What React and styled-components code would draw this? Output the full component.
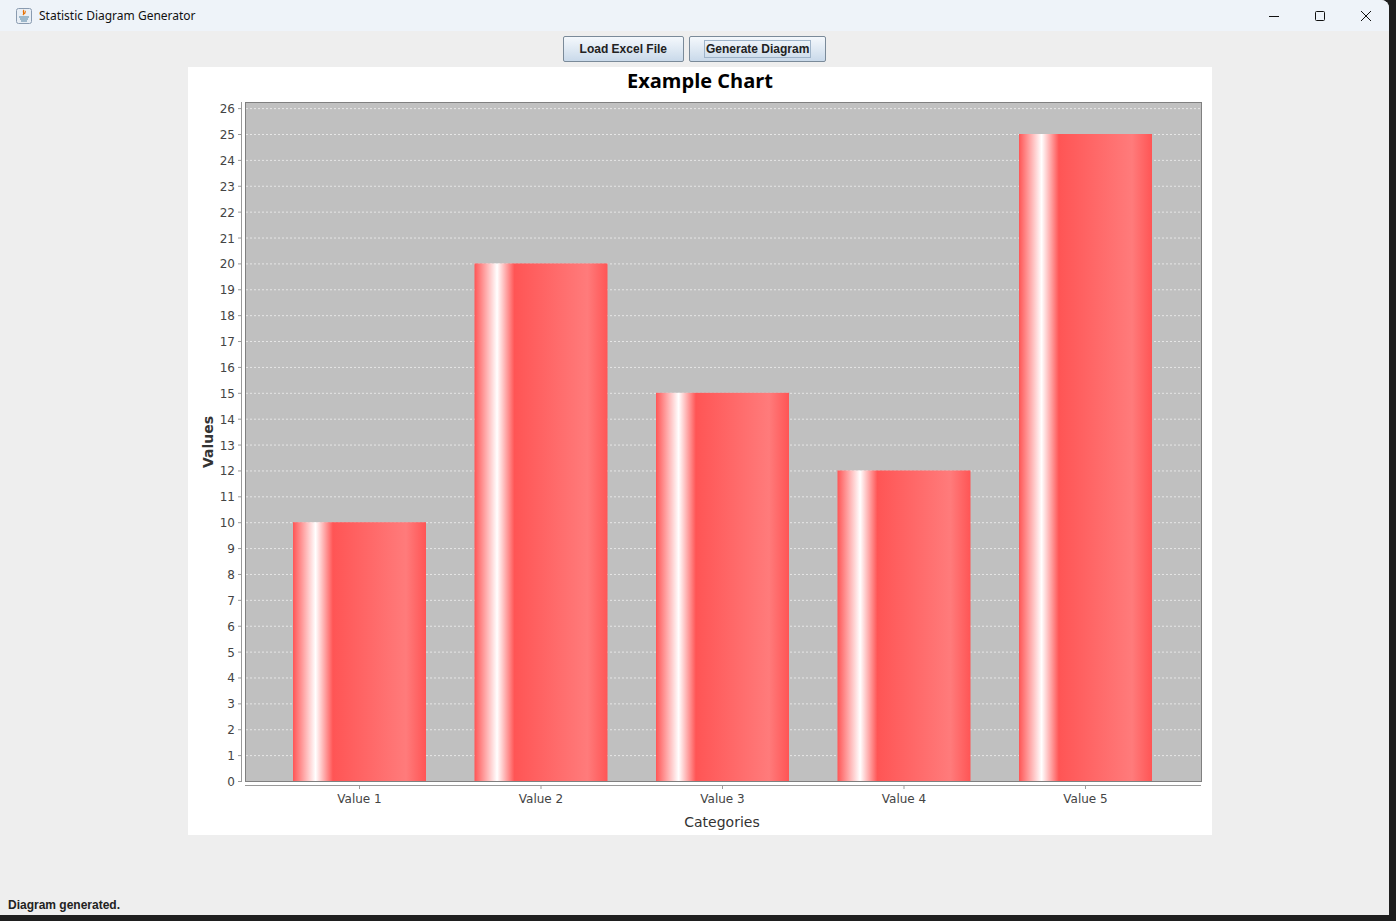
import React from "react";
import styled, { createGlobalStyle } from "styled-components";

const Global = createGlobalStyle`
  html, body { margin: 0; padding: 0; background: #1f1f1f; overflow: hidden; }
  body { font-family: "Liberation Sans", Arial, sans-serif; }
`;

const Window = styled.div`
  width: 1389px; height: 915px; background: #eeeeee;
  display: flex; flex-direction: column; border-radius: 0 8px 0 0; overflow: hidden;
`;
const TitleBar = styled.div`
  height: 31px; background: #eef3f9; display: flex; align-items: center;
  padding-left: 16px; font-family: "Segoe UI", "Noto Sans", sans-serif; font-size: 12px; color: #111;
`;
const TitleText = styled.span` margin-left: 7px; flex: 1; `;
const Ctrl = styled.div`
  width: 46px; height: 31px; display: flex; align-items: center; justify-content: center;
`;
const Toolbar = styled.div`
  display: flex; justify-content: center; gap: 5px; padding-top: 5px; height: 36px; box-sizing: border-box;
`;
const Btn = styled.button`
  height: 26px; padding: 0 ${p => p.$pad}px; border: 1px solid #7a8a99; border-radius: 2px;
  background: linear-gradient(#f4f8fc, #dfe9f3 50%, #c9d9ea);
  font: bold 12px "Liberation Sans", Arial, sans-serif; color: #222;
`;
const Focus = styled.span` border: 1px solid #9fb4c9; padding: 1px 1px; `;
const Main = styled.div` flex: 1; display: flex; justify-content: center; padding-left: 10px; `;
const Panel = styled.div` width: 1024px; height: 768px; background: #fff; `;
const Status = styled.div` height: 17px; padding-left: 8px; font: bold 12px "Liberation Sans", Arial, sans-serif; color: #222; `;

const vals = [10, 20, 15, 12, 25];
const px = 25.88;
const y0 = 714;

function Chart() {
  const ticks = Array.from({ length: 27 }, (_, i) => i);
  return (
    <svg width="1024" height="768" style={{ display: "block" }}>
      <defs>
        <linearGradient id="bar" x1="0" x2="1" y1="0" y2="0">
          <stop offset="0" stopColor="#ff5555" />
          <stop offset="0.17" stopColor="#ffffff" />
          <stop offset="0.3" stopColor="#ff5555" />
          <stop offset="0.85" stopColor="#ff7b7b" />
          <stop offset="1" stopColor="#ff5555" />
        </linearGradient>
      </defs>
      <text x="512" y="21" textAnchor="middle" fontFamily="'Open Sans', 'DejaVu Sans', sans-serif" fontWeight="bold" fontSize="20">Example Chart</text>
      <rect x="57.5" y="35.5" width="956" height="679" fill="#c0c0c0" stroke="#808080" />
      {ticks.map(t => (
        <g key={t}>
          {t > 0 && <line x1="58" x2="1013" y1={y0 - t * px + 0.5} y2={y0 - t * px + 0.5} stroke="#f0f0f0" strokeDasharray="2 2" strokeWidth="0.8" />}
          <line x1="50" x2="53" y1={y0 - t * px + 0.5} y2={y0 - t * px + 0.5} stroke="#999" />
          <text x="47" y={y0 - t * px + 5} textAnchor="end" fontFamily="'DejaVu Sans', sans-serif" fontSize="12" fill="#444">{t}</text>
        </g>
      ))}
      <line x1="53.5" x2="53.5" y1="35" y2="715" stroke="#999" />
      <line x1="57" x2="1013" y1="718.5" y2="718.5" stroke="#999" />
      {vals.map((v, i) => {
        const x = 105 + i * 181.5;
        return (
          <g key={i}>
            <rect x={x} y={y0 - v * px} width="133" height={v * px} fill="url(#bar)" />
            <line x1={x + 66.5} x2={x + 66.5} y1="719" y2="722" stroke="#999" />
            <text x={x + 66.5} y="736" textAnchor="middle" fontFamily="'DejaVu Sans', sans-serif" fontSize="12" fill="#444">Value {i + 1}</text>
          </g>
        );
      })}
      <text x="534" y="760" textAnchor="middle" fontFamily="'DejaVu Sans', sans-serif" fontSize="14" fill="#333">Categories</text>
      <text transform="translate(25 375) rotate(-90)" textAnchor="middle" fontFamily="'DejaVu Sans', sans-serif" fontSize="14" fontWeight="bold" fill="#333">Values</text>
    </svg>
  );
}

export default function App() {
  return (
    <>
      <Global />
      <Window>
        <TitleBar>
          <svg width="16" height="16" viewBox="0 0 16 16">
            <rect x="0.5" y="0.5" width="15" height="15" rx="2" fill="#e8eef5" stroke="#8a9bb0" />
            <path d="M8 2c-2 2 1 3-1 5M9 3c1 1-1 2 0 3" stroke="#e76f00" fill="none" strokeWidth="1.2" />
            <path d="M3 9h10M4 11h8M5 13h6" stroke="#5382a1" strokeWidth="1" />
          </svg>
          <TitleText>Statistic Diagram Generator</TitleText>
          <Ctrl><svg width="12" height="12"><line x1="1" x2="11" y1="6.5" y2="6.5" stroke="#111" /></svg></Ctrl>
          <Ctrl><svg width="12" height="12"><rect x="1.5" y="1.5" width="9" height="9" rx="1" fill="none" stroke="#111" /></svg></Ctrl>
          <Ctrl><svg width="12" height="12"><path d="M1 1L11 11M11 1L1 11" stroke="#111" /></svg></Ctrl>
        </TitleBar>
        <Toolbar>
          <Btn $pad={16}>Load Excel File</Btn>
          <Btn $pad={14}><Focus>Generate Diagram</Focus></Btn>
        </Toolbar>
        <Main><Panel><Chart /></Panel></Main>
        <Status>Diagram generated.</Status>
      </Window>
    </>
  );
}
